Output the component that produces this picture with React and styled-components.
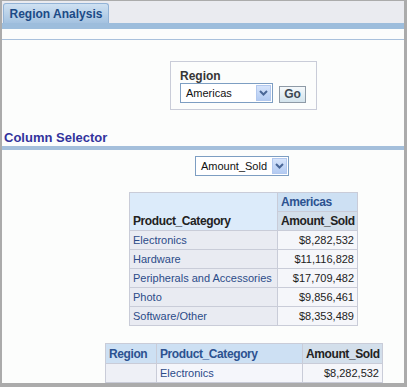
import styled, { createGlobalStyle } from "styled-components";

const GlobalStyle = createGlobalStyle`
  html, body {
    margin: 0;
    padding: 0;
    background: #ababab;
    overflow: hidden;
  }
  body {
    font-family: "Liberation Sans", Arial, sans-serif;
  }
`;

const categories = [
  { name: "Electronics", amount: "$8,282,532" },
  { name: "Hardware", amount: "$11,116,828" },
  { name: "Peripherals and Accessories", amount: "$17,709,482" },
  { name: "Photo", amount: "$9,856,461" },
  { name: "Software/Other", amount: "$8,353,489" },
];

const Chevron = () => (
  <svg width="9" height="6" viewBox="0 0 9 6">
    <path d="M1 1 L4.5 4.5 L8 1" fill="none" stroke="#4a6797" strokeWidth="2" />
  </svg>
);

const Select = ({ value, width }) => (
  <SelectBox $width={width}>
    <span>{value}</span>
    <ArrowButton>
      <Chevron />
    </ArrowButton>
  </SelectBox>
);

const App = () => {
  return (
    <>
      <GlobalStyle />
      <Page>
        <TabBar>
          <Tab>Region Analysis</Tab>
        </TabBar>
        <Strip />
        <ThinRule />

        <PromptBox>
          <Label>Region</Label>
          <PromptRow>
            <Select value="Americas" width={93} />
            <GoButton>Go</GoButton>
          </PromptRow>
        </PromptBox>

        <SectionTitle>Column Selector</SectionTitle>
        <ThickRule />

        <SelectorRow>
          <Select value="Amount_Sold" width={94} />
        </SelectorRow>

        <Pivot>
          <colgroup>
            <col style={{ width: 148 }} />
            <col style={{ width: 80 }} />
          </colgroup>
          <tbody>
            <tr>
              <RowHead rowSpan={2}>Product_Category</RowHead>
              <ColHead>Americas</ColHead>
            </tr>
            <tr>
              <MeasureHead>Amount_Sold</MeasureHead>
            </tr>
            {categories.map((c) => (
              <tr key={c.name}>
                <NameCell>{c.name}</NameCell>
                <AmountCell>{c.amount}</AmountCell>
              </tr>
            ))}
          </tbody>
        </Pivot>

        <Flat>
          <colgroup>
            <col style={{ width: 51 }} />
            <col style={{ width: 146 }} />
            <col style={{ width: 80 }} />
          </colgroup>
          <tbody>
            <HeadRow>
              <ColHead>Region</ColHead>
              <ColHead>Product_Category</ColHead>
              <MeasureHead>Amount_Sold</MeasureHead>
            </HeadRow>
            <tr>
              <EmptyCell />
              <NameCell $light>Electronics</NameCell>
              <AmountCell>$8,282,532</AmountCell>
            </tr>
          </tbody>
        </Flat>
      </Page>
    </>
  );
};

export default App;

const Page = styled.div`
  width: 402px;
  height: 382px;
  margin: 1px 0 0 2px;
  background: #fcfdfc;
  overflow: hidden;
  display: flex;
  flex-direction: column;
`;

const TabBar = styled.div`
  display: flex;
  align-items: flex-end;
  height: 22px;
  background: #eaebf0;
  padding-left: 1px;
  box-sizing: border-box;
`;

const Tab = styled.div`
  width: 106px;
  height: 20px;
  box-sizing: border-box;
  border: 1px solid #93b3d6;
  border-bottom: none;
  border-radius: 3px 3px 0 0;
  background: linear-gradient(#cfe1f2, #a4c2e0);
  color: #1c4a86;
  font-size: 12px;
  font-weight: bold;
  display: flex;
  align-items: center;
  justify-content: center;
  padding-top: 1px;
`;

const Strip = styled.div`
  height: 6px;
  background: #9dbddc;
`;

const ThinRule = styled.div`
  height: 1px;
  margin-top: 10px;
  background: #a9c1dc;
`;

const PromptBox = styled.div`
  align-self: flex-start;
  margin: 21px 0 0 168px;
  width: 147px;
  height: 49px;
  box-sizing: border-box;
  border: 1px solid #c9ccd8;
  padding: 7px 0 0 9px;
`;

const Label = styled.div`
  font-size: 12px;
  font-weight: bold;
  color: #363636;
  line-height: 14px;
`;

const PromptRow = styled.div`
  display: flex;
  align-items: center;
  gap: 6px;
`;

const SelectBox = styled.div`
  width: ${(p) => p.$width}px;
  height: 20px;
  box-sizing: border-box;
  border: 1px solid #7d9ec2;
  background: #fff;
  display: flex;
  align-items: center;
  justify-content: space-between;
  padding: 0 1px 0 5px;
  font-size: 11px;
  color: #111;
  span {
    white-space: nowrap;
  }
`;

const ArrowButton = styled.div`
  width: 15px;
  height: 16px;
  flex: none;
  box-sizing: border-box;
  border: 1px solid #b2c8ee;
  background: linear-gradient(#d6e4fb, #b3cbf2);
  display: flex;
  align-items: center;
  justify-content: center;
`;

const GoButton = styled.div`
  width: 27px;
  height: 17px;
  box-sizing: border-box;
  border: 1px solid #8e9aa6;
  background: linear-gradient(#f5f9fb, #d3e3ec);
  color: #3c4752;
  font-size: 12px;
  font-weight: bold;
  display: flex;
  align-items: center;
  justify-content: center;
  margin-top: 2px;
`;

const SectionTitle = styled.div`
  margin: 20px 0 0 2px;
  font-size: 13px;
  font-weight: bold;
  color: #32339c;
  line-height: 15px;
`;

const ThickRule = styled.div`
  height: 4px;
  margin-top: 1px;
  background: #a4bfdb;
`;

const SelectorRow = styled.div`
  display: flex;
  padding-left: 193px;
  margin-top: 6px;
`;

const Table = styled.table`
  border-collapse: collapse;
  table-layout: fixed;
  font-size: 11px;
  td {
    border: 1px solid #c9ccd8;
    padding: 0 3px;
    white-space: nowrap;
    overflow: hidden;
    height: 18px;
  }
`;

const Pivot = styled(Table)`
  margin: 16px 0 0 127px;
  width: 229px;
`;

const Flat = styled(Table)`
  margin: 17px 0 0 103px;
  width: 278px;
`;

const HeadRow = styled.tr`
  td {
    height: 19px;
  }
`;

const Head = styled.td`
  && {
    font-weight: bold;
    font-size: 12px;
    letter-spacing: -0.4px;
  }
`;

const RowHead = styled(Head)`
  && {
    background: #dcebfa;
    color: #222;
    vertical-align: bottom;
    padding-bottom: 2px;
  }
`;

const ColHead = styled(Head)`
  && {
    background: #cde0f3;
    color: #2c5290;
  }
`;

const MeasureHead = styled(Head)`
  && {
    background: #d3dfeb;
    color: #222;
  }
`;

const NameCell = styled.td`
  && {
    background: ${(p) => (p.$light ? "#f5f6fb" : "#e9ebf2")};
    color: #2c4b89;
  }
`;

const AmountCell = styled.td`
  && {
    background: #f5f6fa;
    color: #222;
    text-align: right;
  }
`;

const EmptyCell = styled.td`
  && {
    background: #eef0f6;
  }
`;
